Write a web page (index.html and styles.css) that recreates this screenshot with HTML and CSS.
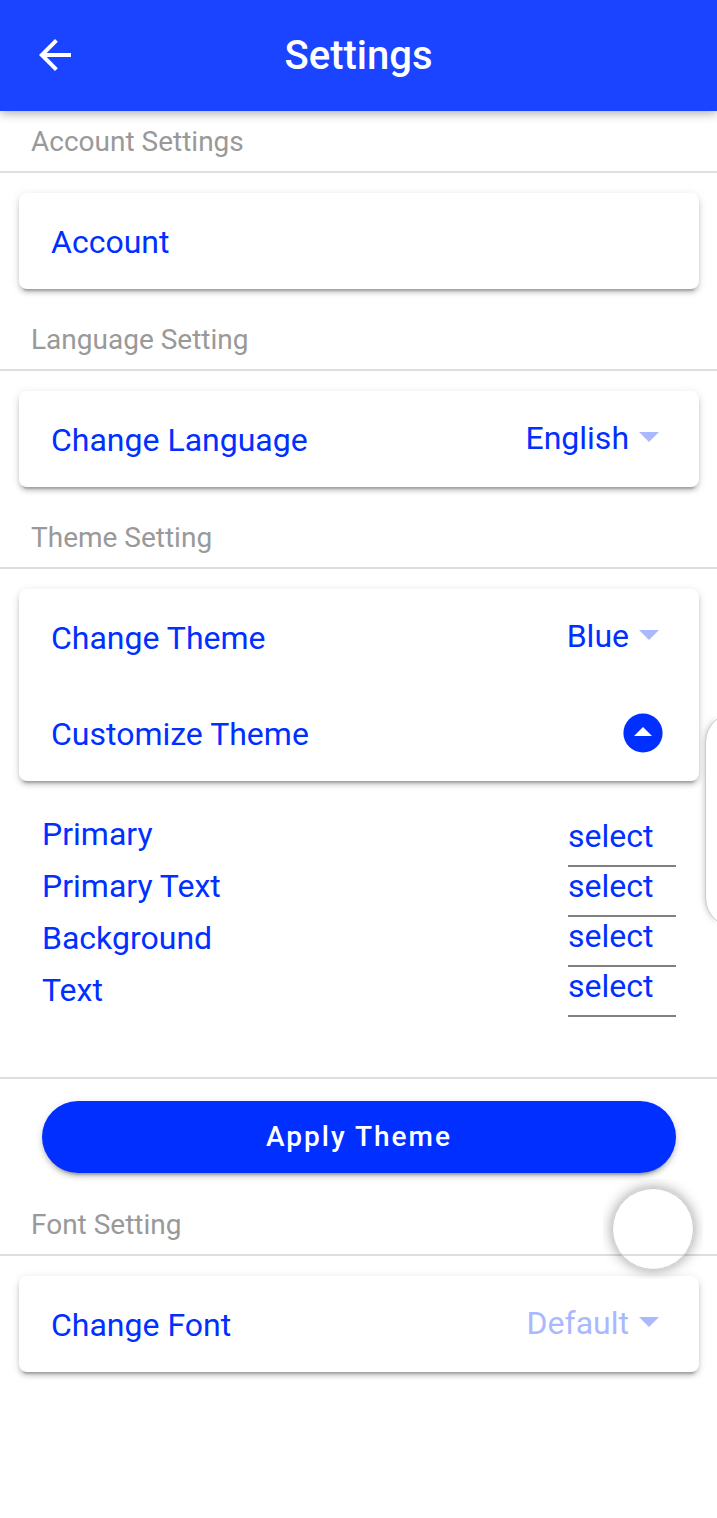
FILE: index.html
```html
<!DOCTYPE html>
<html lang="en">
<head>
<meta charset="utf-8">
<meta name="viewport" content="width=device-width, initial-scale=1">
<title>Settings</title>
<link rel="stylesheet" href="styles.css">
</head>
<body>
<header class="topbar">
  <button class="back" type="button" aria-label="Back">
    <svg viewBox="0 0 32 32" width="32" height="32"><path d="M16 0 18.8 2.8 7.7 14H32v4H7.7l11.1 11.2L16 32 0 16z" fill="#fff"/></svg>
  </button>
  <h1 class="title">Settings</h1>
</header>
<main>
  <h2 class="heading">Account Settings</h2>
  <div class="card">
    <a class="row" href="#account">Account</a>
  </div>

  <h2 class="heading">Language Setting</h2>
  <div class="card">
    <div class="row">
      <label for="language">Change Language</label>
      <span class="picker">
        <select id="language"><option>English</option></select>
        <svg class="caret" viewBox="0 0 20 10" width="20" height="10"><path d="M0 0h20L10 10z"/></svg>
      </span>
    </div>
  </div>

  <h2 class="heading">Theme Setting</h2>
  <div class="card">
    <div class="row">
      <label for="theme">Change Theme</label>
      <span class="picker">
        <select id="theme"><option>Blue</option></select>
        <svg class="caret" viewBox="0 0 20 10" width="20" height="10"><path d="M0 0h20L10 10z"/></svg>
      </span>
    </div>
    <div class="row">
      <span>Customize Theme</span>
      <button class="toggle" type="button" aria-label="Collapse customize theme" aria-expanded="true">
        <svg viewBox="0 0 40 40" width="40" height="40"><circle cx="20" cy="20" r="19.6" fill="#002fff"/><path d="M11 23h18l-9-9z" fill="#fff"/></svg>
      </button>
    </div>
  </div>

  <form class="custom">
    <div class="colors">
      <div class="names">
        <label for="c1">Primary</label>
        <label for="c2">Primary Text</label>
        <label for="c3">Background</label>
        <label for="c4">Text</label>
      </div>
      <div class="fields">
        <input id="c1" type="text" value="select">
        <input id="c2" type="text" value="select">
        <input id="c3" type="text" value="select">
        <input id="c4" type="text" value="select">
      </div>
    </div>
    <button class="apply" type="button">Apply Theme</button>
  </form>

  <h2 class="heading">Font Setting</h2>
  <div class="card">
    <div class="row">
      <label for="font">Change Font</label>
      <span class="picker">
        <select id="font" class="unset"><option>Default</option></select>
        <svg class="caret" viewBox="0 0 20 10" width="20" height="10"><path d="M0 0h20L10 10z"/></svg>
      </span>
    </div>
  </div>
</main>
<svg class="edge-handle" viewBox="0 0 20 240" width="20" height="240" aria-hidden="true">
  <path d="M20 19A31 31 0 0 0 8.5 43V197A31 31 0 0 0 20 221z" fill="#fff"/>
  <path d="M20 19A31 31 0 0 0 8.5 43V197A31 31 0 0 0 20 221" fill="none" stroke="#ccc"/>
</svg>
<div class="float-wrap"><div class="float-ring"></div></div>
</body>
</html>
```
FILE: styles.css
```css
* { box-sizing: border-box; }
body {
  margin: 0;
  min-height: 100vh;
  position: relative;
  background: #fff;
  color: #002fff;
  font: 400 32px/40px Roboto, sans-serif;
}
button, input, select { font: inherit; color: inherit; border: 0; background: none; padding: 0; margin: 0; border-radius: 0; }
svg { display: block; }
.topbar {
  display: grid;
  grid-template-columns: 72px 1fr 72px;
  align-items: center;
  height: 111px;
  background: #1a44ff;
  color: #fff;
  box-shadow: 0 2px 10px rgba(0, 0, 0, .35);
}
.back { padding: 0 0 2px 39px; }
.title { margin: 0; text-align: center; font-size: 40px; font-weight: 500; line-height: 48px; }
.heading {
  margin: 0;
  padding: 15px 31px 13px;
  border-bottom: 2px solid #dedede;
  color: #999;
  font-size: 28px;
  font-weight: 400;
  line-height: 32px;
}
.card {
  margin: 20px 18px 20px 19px;
  border-radius: 8px;
  background: #fff;
  box-shadow: 0 6px 2px -4px rgba(0, 0, 0, .2), 0 4px 4px rgba(0, 0, 0, .14), 0 2px 10px rgba(0, 0, 0, .12);
}
.row {
  display: flex;
  align-items: center;
  justify-content: space-between;
  height: 96px;
  padding: 2px 36px 0 32px;
  color: inherit;
  text-decoration: none;
}
.picker { display: flex; align-items: center; gap: 10px; padding: 0 4px 4px 0; }
.picker select { appearance: none; height: 40px; text-align: right; text-align-last: right; }
.picker .unset { color: #aab9ff; }
.caret { fill: #aab9ff; margin-bottom: 2px; }
.toggle { margin-bottom: 2px; }
.colors {
  display: flex;
  justify-content: space-between;
  padding: 7px 41px 60px 42px;
  border-bottom: 2px solid #dedede;
}
.names { display: flex; flex-direction: column; line-height: 52px; }
.fields { display: flex; flex-direction: column; padding-top: 9px; }
.fields input {
  width: 108px;
  height: 50px;
  padding-bottom: 10px;
  border-bottom: 2px solid #808080;
}
.apply {
  display: block;
  width: calc(100% - 83px);
  height: 72px;
  margin: 22px 41px 21px 42px;
  border-radius: 36px;
  background: #002fff;
  color: #fff;
  font-size: 28px;
  font-weight: 500;
  letter-spacing: 2px;
  box-shadow: 0 6px 2px -4px rgba(0, 0, 0, .2), 0 4px 4px rgba(0, 0, 0, .14), 0 2px 10px rgba(0, 0, 0, .12);
}
.edge-handle {
  position: absolute;
  top: 700px;
  right: 0;
  filter: drop-shadow(0 0 3px rgba(0, 0, 0, .25));
}
.float-wrap {
  position: absolute;
  top: 1179px;
  right: 14px;
  padding: 9px;
  overflow: hidden;
}
.float-ring {
  width: 82px;
  height: 82px;
  border: 1px solid #c8c8c8;
  border-radius: 50%;
  box-shadow: 0 0 14px rgba(0, 0, 0, .4);
}
```
